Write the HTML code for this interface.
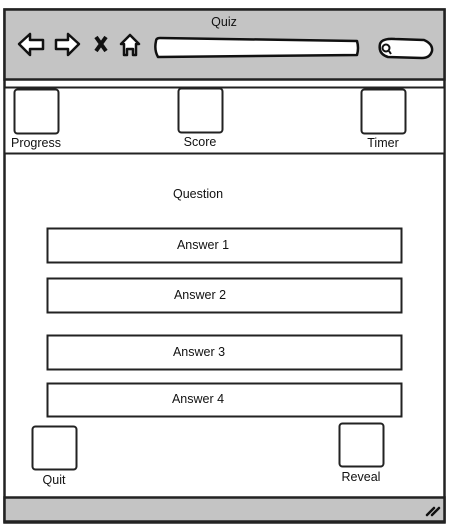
<!DOCTYPE html>
<html><head><style>body{margin:0;background:#fff}svg{display:block}text{font-family:"Liberation Sans",sans-serif;font-size:12.5px;fill:#111}</style></head><body>
<svg width="453" height="528" viewBox="0 0 453 528">
<rect x="4.5" y="9.5" width="440" height="513" fill="#fff" stroke="#222" stroke-width="2.5"/>
<rect x="4.5" y="9.5" width="440" height="70" fill="#c4c4c4" stroke="#222" stroke-width="2.5"/>
<text x="224" y="26" text-anchor="middle">Quiz</text>
<g fill="#fff" stroke="#111" stroke-width="2.5" stroke-linejoin="round">
<path d="M19 44 L30 34 L30 40 L43 40 L43 49 L30 49 L30 55 Z"/>
<path d="M79 44 L68 34 L68 40 L56 40 L56 49 L68 49 L68 55 Z"/>
<path d="M121 44 L130 35 L139 44 L136 44 L136 55 L133 55 L133 49 L127 49 L127 55 L124 55 L124 44 Z"/>
<path d="M156 41 Q156 38 160 38 L357 41 Q359 48 357 55 L158 57 Q154 50 156 41 Z"/>
<path d="M380 44 Q382 38 395 39 L424 40 Q433 44 432 51 Q430 58 422 58 L388 57 Q378 54 380 44 Z"/>
</g>
<path d="M96 37 L106 51 M106 37 L96 51" stroke="#111" stroke-width="4"/>
<circle cx="386" cy="48" r="3.5" fill="none" stroke="#111" stroke-width="2"/>
<line x1="389" y1="51" x2="391" y2="54" stroke="#111" stroke-width="2"/>
<rect x="4.5" y="87.5" width="440" height="66" fill="#fff" stroke="#222" stroke-width="2"/>
<g fill="#fff" stroke="#222" stroke-width="2">
<rect x="14.5" y="89.5" width="44" height="44" rx="3"/>
<rect x="178.5" y="88.5" width="44" height="44" rx="3"/>
<rect x="361.5" y="89.5" width="44" height="44" rx="3"/>
<rect x="47.5" y="228.5" width="354" height="34"/>
<rect x="47.5" y="278.5" width="354" height="34"/>
<rect x="47.5" y="335.5" width="354" height="34"/>
<rect x="47.5" y="383.5" width="354" height="33"/>
<rect x="32.5" y="426.5" width="44" height="43" rx="3"/>
<rect x="339.5" y="423.5" width="44" height="43" rx="3"/>
</g>
<text x="36" y="147" text-anchor="middle">Progress</text>
<text x="200" y="146" text-anchor="middle">Score</text>
<text x="383" y="147" text-anchor="middle">Timer</text>
<text x="198" y="198" text-anchor="middle">Question</text>
<text x="203" y="249" text-anchor="middle">Answer 1</text>
<text x="200" y="299" text-anchor="middle">Answer 2</text>
<text x="199" y="356" text-anchor="middle">Answer 3</text>
<text x="198" y="403" text-anchor="middle">Answer 4</text>
<text x="54" y="484" text-anchor="middle">Quit</text>
<text x="361" y="481" text-anchor="middle">Reveal</text>
<rect x="4.5" y="497.5" width="440" height="24" fill="#c4c4c4" stroke="#222" stroke-width="2.5"/>
<path d="M427 515 L434 508 M432 515 L439 508" stroke="#111" stroke-width="2.5" stroke-linecap="round"/>
</svg>
</body></html>
